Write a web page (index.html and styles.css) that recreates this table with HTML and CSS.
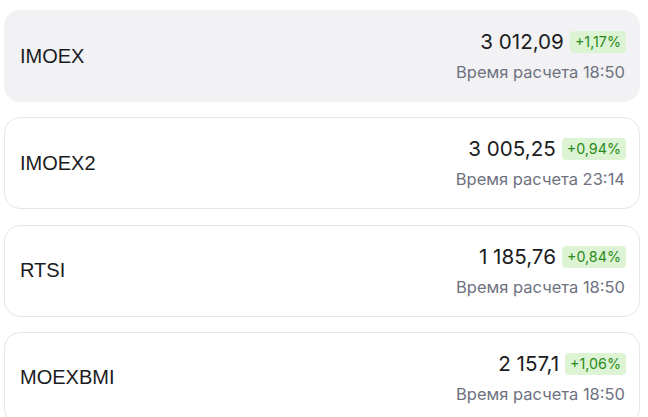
FILE: index.html
```html
<!DOCTYPE html>
<html lang="ru">
<head>
<meta charset="utf-8">
<link rel="stylesheet" href="styles.css">
</head>
<body>
<div class="list">
  <div class="card active">
    <div class="name">IMOEX</div>
    <div class="info">
      <div class="row"><span class="price">3 012,09</span><span class="badge">+1,17%</span></div>
      <div class="time">Время расчета 18:50</div>
    </div>
  </div>
  <div class="card">
    <div class="name">IMOEX2</div>
    <div class="info">
      <div class="row"><span class="price">3 005,25</span><span class="badge">+0,94%</span></div>
      <div class="time">Время расчета 23:14</div>
    </div>
  </div>
  <div class="card">
    <div class="name">RTSI</div>
    <div class="info">
      <div class="row"><span class="price">1 185,76</span><span class="badge">+0,84%</span></div>
      <div class="time">Время расчета 18:50</div>
    </div>
  </div>
  <div class="card">
    <div class="name">MOEXBMI</div>
    <div class="info">
      <div class="row"><span class="price">2 157,1</span><span class="badge">+1,06%</span></div>
      <div class="time">Время расчета 18:50</div>
    </div>
  </div>
</div>
</body>
</html>
```
FILE: styles.css
```css
html, body { margin: 0; padding: 0; background: #fff; }
body { font-family: Inter, "Noto Sans", sans-serif; color: #1b1c21; }
.list {
  display: flex;
  flex-direction: column;
  gap: 15.3px;
  padding: 10px 8px 0 4px;
}
.card {
  display: flex;
  align-items: center;
  justify-content: space-between;
  height: 92px;
  flex-shrink: 0;
  box-sizing: border-box;
  padding: 0 13px 0 15px;
  border: 1px solid #e6e6ea;
  border-radius: 16px;
  background: #fff;
}
.card.active { background: #f2f2f4; border-color: #f2f2f4; }
.name {
  font-family: "Liberation Sans", Arial, sans-serif;
  font-size: 20px;
  color: #1b1c21;
}
.info {
  display: flex;
  flex-direction: column;
  align-items: flex-end;
  gap: 8px;
}
.row { display: flex; align-items: center; gap: 6px; }
.price { font-size: 20.6px; line-height: 24px; }
.badge {
  background: #dcf4d4;
  color: #2b8a1b;
  font-size: 14.3px;
  line-height: 22px;
  padding: 0 5px;
  border-radius: 4px;
}
.time { font-size: 16.5px; line-height: 20px; color: #6e7180; margin-right: 1px; }
```
